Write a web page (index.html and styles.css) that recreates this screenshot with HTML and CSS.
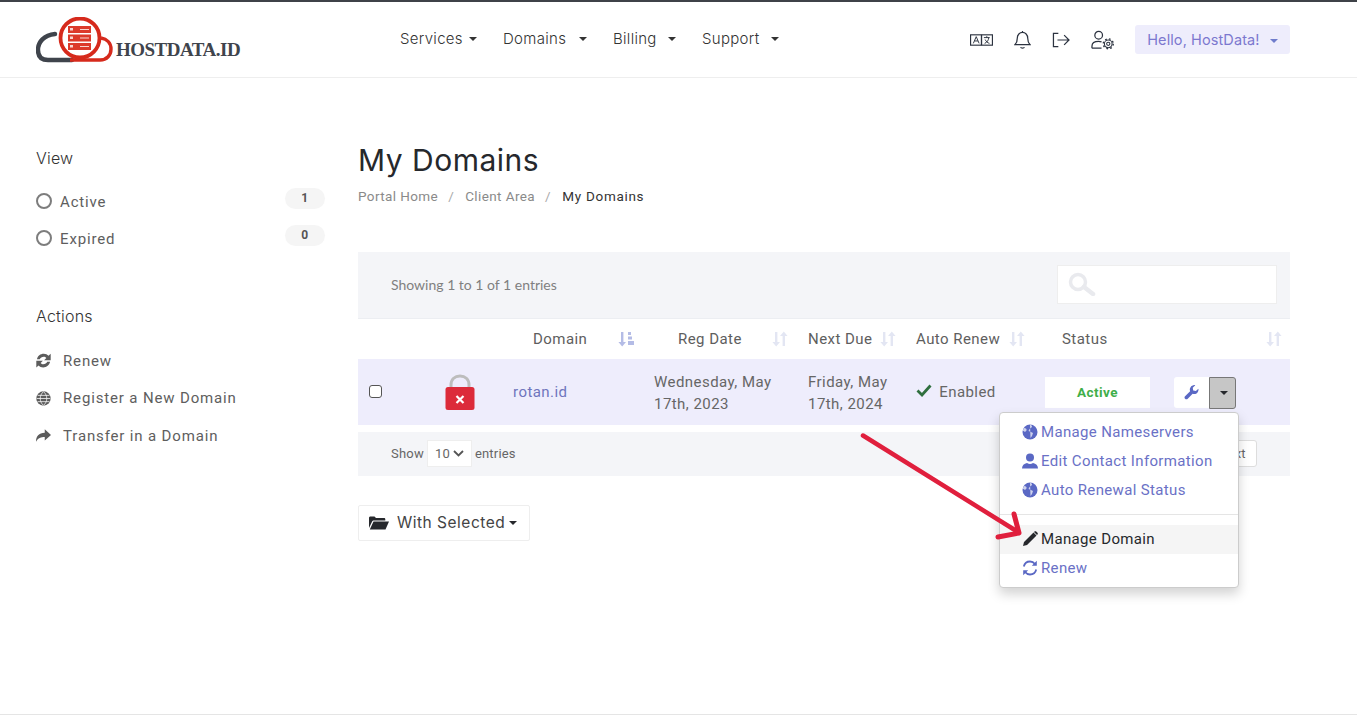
FILE: index.html
```html
<!DOCTYPE html>
<html lang="en">
<head>
    <meta charset="utf-8" />
    <meta name="viewport" content="width=device-width, initial-scale=1.0" />
    <title>My Domains - HostData.id</title>
    <link rel="stylesheet" href="styles.css">
</head>
<body>
    <header class="topbar">
        <a class="logo" href="#">
            <svg class="logo-mark" width="78" height="46" viewBox="0 0 78 46">
                <path d="M19 17C8 18 2 25 2 33c0 7 4 10 10 10h24" fill="none" stroke="#3f444c" stroke-width="4.4" stroke-linecap="round"/>
                <path d="M34 43h30c7 0 11-5 11-11 0-6-4-10-10-11" fill="none" stroke="#d62a1c" stroke-width="3.4"/>
                <circle cx="44" cy="21" r="19.5" fill="#fff" stroke="#d62a1c" stroke-width="3.8"/>
                <g fill="#dc3a2b">
                    <rect x="32" y="9" width="23" height="7"/>
                    <rect x="32" y="17.5" width="23" height="7"/>
                    <rect x="32" y="26" width="23" height="7"/>
                </g>
                <g fill="#f8d5d0">
                    <rect x="34" y="11" width="3" height="2.5"/>
                    <rect x="34" y="19.5" width="3" height="2.5"/>
                    <rect x="34" y="28" width="3" height="2.5"/>
                    <rect x="44" y="12" width="9" height="1"/>
                    <rect x="44" y="20.5" width="9" height="1"/>
                    <rect x="44" y="29" width="9" height="1"/>
                </g>
            </svg>
            <span class="logo-text">HOSTDATA.ID</span>
        </a>
        <nav class="mainnav">
            <a href="#">Services <i class="caret"></i></a>
            <a href="#">Domains <i class="caret"></i></a>
            <a href="#">Billing <i class="caret"></i></a>
            <a href="#">Support <i class="caret"></i></a>
        </nav>
        <div class="tools">
            <svg width="23" height="14" viewBox="0 0 24 14" fill="none" stroke="#2c3340" stroke-width="1.2">
                <rect x="0.6" y="1.6" width="22.8" height="10.8"/>
                <path d="M12 1.5v11" stroke-width="1.4"/>
                <path d="M3.500 10.500l3-7 3 7M4.800 8h3.500M14.500 4.500h6M17.500 3v1.500M15.300 10.500c2.500-1 4-3 4.300-6M15.800 6.500c1 2 2.500 3.500 4.500 4" stroke-width="1"/>
            </svg>
            <svg width="17" height="20" viewBox="0 0 18 20" fill="none" stroke="#2c3340" stroke-width="1.3">
                <path d="M1 15c2-2 2.500-3.500 2.500-7 0-3.500 2.500-6 5.500-6s5.500 2.500 5.500 6c0 3.500.5 5 2.500 7zM9 .5v1.500M7 17.500c.5 1.500 3.500 1.500 4 0"/>
            </svg>
            <svg width="18" height="16" viewBox="0 0 20 18" fill="none" stroke="#2c3340" stroke-width="1.4">
                <path d="M7 1.500H1.500v15H7M6 9h13M13.500 3.500L19 9l-5.500 5.500"/>
            </svg>
            <svg width="23" height="20" viewBox="0 0 24 20" fill="none" stroke="#2c3340" stroke-width="1.3">
                <circle cx="8" cy="5" r="4"/>
                <path d="M1 18.500v-2c0-3 2.500-5 7-5 1.200 0 2.200.1 3 .4M1 18.500h10"/>
                <circle cx="18" cy="14" r="1.700" stroke-width="1.100"/>
                <circle cx="18" cy="14" r="4" stroke-width="1.100"/>
                <circle cx="18" cy="14" r="5.200" stroke-dasharray="1.800 2.300" stroke-width="1.500"/>
            </svg>
            <a class="hello" href="#">Hello, HostData! <i class="caret caret-blue"></i></a>
        </div>
    </header>

    <div class="page">
        <aside class="sidebar">
            <h3 class="side-title">View</h3>
            <ul class="filters">
                <li><span class="radio"></span><span class="filter-name">Active</span><span class="count">1</span></li>
                <li><span class="radio"></span><span class="filter-name">Expired</span><span class="count">0</span></li>
            </ul>
            <h3 class="side-title side-actions">Actions</h3>
            <ul class="actions-list">
                <li>
                    <svg width="15" height="15" viewBox="0 0 24 24" fill="#5c5c5c"><path d="M1.500 10C2.500 4.500 7 1 12.500 1c3 0 5.700 1.200 7.500 3.200L23.500 1v10.500H13l3.500-3.500C15.500 6.700 14 6 12.500 6 9.500 6 7 7.500 6 10zM22.500 14c-1 5.500-5.500 9-11 9-3 0-5.700-1.200-7.500-3.200L.5 23V12.500H11L7.500 16c1 1.300 2.500 2 4 2 3 0 5.500-1.500 6.500-4z"/></svg>
                    Renew
                </li>
                <li>
                    <svg width="15" height="15" viewBox="0 0 24 24" fill="none"><circle cx="12" cy="12" r="11.500" fill="#5c5c5c"/><path d="M1 12h22M2.500 7h19M2.500 17h19M12 1c-7 6-7 16 0 22M12 1c7 6 7 16 0 22" stroke="#fff" stroke-width="1.200"/></svg>
                    Register a New Domain
                </li>
                <li>
                    <svg width="15" height="15" viewBox="0 0 24 24" fill="#5c5c5c"><path d="M14 2l10 9-10 9v-5.500C8 14.500 3.500 16 0 22c0-9 4.500-14.500 14-14.500z"/></svg>
                    Transfer in a Domain
                </li>
            </ul>
        </aside>

        <main class="content">
            <h1 class="title">My Domains</h1>
            <ol class="crumbs">
                <li>Portal Home</li>
                <li>Client Area</li>
                <li class="current">My Domains</li>
            </ol>

            <div class="table-top">
                <span class="info">Showing 1 to 1 of 1 entries</span>
                <div class="search">
                    <svg width="28" height="24" viewBox="0 0 28 24" fill="none" stroke="#e9eaee"><circle cx="10" cy="10" r="7.500" stroke-width="3.500"/><path d="M16 15l9 7" stroke-width="4.500" stroke-linecap="round"/></svg>
                </div>
            </div>

            <table class="domains">
                <colgroup>
                    <col class="c-check"><col class="c-ssl"><col class="c-name"><col class="c-reg"><col class="c-due"><col class="c-auto"><col class="c-status"><col class="c-act">
                </colgroup>
                <thead>
                    <tr>
                        <th></th>
                        <th></th>
                        <th class="th-domain"><div class="th-in">Domain
                            <svg class="sort sort-on" width="16" height="16" viewBox="0 0 16 16"><path d="M3 1h2.400v10H8l-3.800 4.500L.4 11H3z"/><path d="M10 1h3v3h-3zM10 5.500h4v3h-4zM10 10h6v4h-6z"/></svg>
                        </div></th>
                        <th class="th-reg"><div class="th-in">Reg Date
                            <svg class="sort" width="16" height="16" viewBox="0 0 16 16"><path d="M3 1h2.400v10H8l-3.800 4.500L.4 11H3zM10.600 15h2.400V5h2.600L11.800.5 8 5h2.600z"/></svg>
                        </div></th>
                        <th><div class="th-in">Next Due
                            <svg class="sort" width="16" height="16" viewBox="0 0 16 16"><path d="M3 1h2.400v10H8l-3.800 4.500L.4 11H3zM10.600 15h2.400V5h2.600L11.800.5 8 5h2.600z"/></svg>
                        </div></th>
                        <th><div class="th-in">Auto Renew
                            <svg class="sort" width="16" height="16" viewBox="0 0 16 16"><path d="M3 1h2.400v10H8l-3.800 4.500L.4 11H3zM10.600 15h2.400V5h2.600L11.800.5 8 5h2.600z"/></svg>
                        </div></th>
                        <th class="th-status"><div class="th-in">Status</div></th>
                        <th class="th-last"><div class="th-in"><span></span>
                            <svg class="sort" width="16" height="16" viewBox="0 0 16 16"><path d="M3 1h2.400v10H8l-3.800 4.500L.4 11H3zM10.600 15h2.400V5h2.600L11.800.5 8 5h2.600z"/></svg>
                        </div></th>
                    </tr>
                </thead>
                <tbody>
                    <tr>
                        <td class="td-check"><span class="checkbox"></span></td>
                        <td class="td-ssl">
                            <svg width="30" height="36" viewBox="0 0 30 36">
                                <path d="M6 17V11C6 5 10 2 15 2s9 3 9 9v6" fill="none" stroke="#bdbdbd" stroke-width="3"/>
                                <rect x="0.500" y="13" width="29" height="23" rx="2.500" fill="#dc2b3a"/>
                                <path d="M11.500 22l7 7M18.500 22l-7 7" stroke="#fff" stroke-width="2.200"/>
                            </svg>
                        </td>
                        <td class="td-name"><a class="domain-link" href="#">rotan.id</a></td>
                        <td>Wednesday, May 17th, 2023</td>
                        <td>Friday, May 17th, 2024</td>
                        <td class="td-auto">
                            <svg width="16" height="13" viewBox="0 0 16 13" fill="none" stroke="#2f6f3e" stroke-width="2.800"><path d="M1.500 6.500l4.500 4.500L14.500 1.500"/></svg>
                            Enabled
                        </td>
                        <td><span class="badge-active">Active</span></td>
                        <td>
                            <div class="btn-group">
                                <span class="btn-tool">
                                    <svg width="15" height="15" viewBox="0 0 24 24" fill="#5a68c4"><path d="M23 6c.6 3-.5 6-3 7.500-2 1.200-4.300 1.200-6.200.4L6 22c-1.200 1.200-3.200 1.200-4.300 0-1.200-1.200-1.200-3 0-4.200l8.100-7.900C9 8 9 5.700 10.300 3.800 12 1.300 15-.4 18 .3l-4 4 .7 4.300 4.300.8z"/></svg>
                                </span>
                                <span class="btn-toggle"><i class="caret caret-dark"></i></span>
                                <ul class="menu">
                                    <li>
                                        <svg width="16" height="16" viewBox="0 0 16 16"><circle cx="8" cy="8" r="7.500" fill="#5a68c4"/><path d="M8 .5c2 1 2.500 2 1.500 3l-2 1.500-1 2 2.500 1 2 1-1 3-1.500 2zM2 4c2 0 3 1 2.500 2.500L3 8 .8 6.500z" fill="#fff" opacity=".7"/></svg>
                                        Manage Nameservers
                                    </li>
                                    <li>
                                        <svg width="16" height="16" viewBox="0 0 16 16" fill="#5a68c4"><circle cx="8" cy="4.500" r="4"/><path d="M0 15.500c0-3 2-5 5-5.500 2 1.300 4 1.300 6 0 3 .5 5 2.500 5 5.500z"/></svg>
                                        Edit Contact Information
                                    </li>
                                    <li>
                                        <svg width="16" height="16" viewBox="0 0 16 16"><circle cx="8" cy="8" r="7.500" fill="#5a68c4"/><path d="M8 .5c2 1 2.500 2 1.500 3l-2 1.500-1 2 2.500 1 2 1-1 3-1.500 2zM2 4c2 0 3 1 2.500 2.500L3 8 .8 6.500z" fill="#fff" opacity=".7"/></svg>
                                        Auto Renewal Status
                                    </li>
                                    <li class="divider"></li>
                                    <li class="hovered">
                                        <svg width="16" height="16" viewBox="0 0 16 16" fill="#26282c"><path d="M11.500 1.500l3 3L5 14l-4 1 1-4zM12.500.5c.6-.5 1.200-.5 1.700 0l1.300 1.300c.5.5.5 1.100 0 1.700l-.5.500-3-3z"/></svg>
                                        Manage Domain
                                    </li>
                                    <li>
                                        <svg width="16" height="16" viewBox="0 0 16 16" fill="none" stroke="#5a68c4" stroke-width="1.800"><path d="M1.800 6.500C2.500 3.500 5 1.500 8 1.500c2 0 3.800 1 5 2.500M14.200 9.500C13.500 12.500 11 14.500 8 14.500c-2 0-3.800-1-5-2.500"/><path d="M14.800.8v5h-5zM1.200 15.200v-5h5z" fill="#5a68c4" stroke="none"/></svg>
                                        Renew
                                    </li>
                                </ul>
                            </div>
                        </td>
                    </tr>
                </tbody>
            </table>

            <div class="table-foot">
                <div class="length">
                    Show
                    <span class="length-select">10
                        <svg width="11" height="7" viewBox="0 0 11 7" fill="none" stroke="#555" stroke-width="1.800"><path d="M1 1l4.500 4.500L10 1"/></svg>
                    </span>
                    entries
                </div>
                <span class="pager-next">Next</span>
            </div>

            <button class="with-selected">
                <svg width="20" height="15" viewBox="0 0 20 15" fill="#26282c"><path d="M0 3c0-1 .6-1.500 1.500-1.500h4L7 3h8c.8 0 1.300.5 1.300 1.200V5.500H5C4 5.500 3.300 6 3 6.800L0 13zM4.500 6.500H20l-3.500 8H.8z"/></svg>
                With Selected <i class="caret caret-dark"></i>
            </button>
        </main>
    </div>

    <svg class="annotation" width="170" height="115" viewBox="0 0 170 115" fill="none" stroke="#e01f3d" stroke-linecap="round" stroke-linejoin="round">
        <path d="M3 4.500L158 101" stroke-width="4.500"/>
        <path d="M154 83L159 102 138 106" stroke-width="5"/>
    </svg>

    <footer class="foot"></footer>
</body>
</html>
```

FILE: styles.css
```css
* {
    box-sizing: border-box;
}
body {
    margin: 0;
    min-height: 725px;
    font-family: "Roboto", "Open Sans", sans-serif;
    font-size: 15px;
    letter-spacing: 0.45px;
    color: #5e5e5e;
    background-color: #fff;
    overflow: hidden;
    position: relative;
}
a {
    text-decoration: none;
    color: inherit;
}
ul, ol {
    list-style: none;
    margin: 0;
    padding: 0;
}
.caret {
    display: inline-block;
    width: 0;
    height: 0;
    margin-left: 2px;
    vertical-align: middle;
    border-top: 4px solid #333;
    border-left: 4px solid transparent;
    border-right: 4px solid transparent;
}
.caret-blue {
    border-top-color: #6f7ccc;
    margin-left: 6px;
}
.caret-dark {
    border-top-color: #26282c;
}

/* header */
.topbar {
    height: 78px;
    border-top: 2px solid #3f4248;
    border-bottom: 1px solid #eee;
    padding: 0 67px 0 36px;
    display: flex;
    align-items: center;
}
.logo {
    display: flex;
    align-items: flex-end;
    width: 364px;
    height: 46px;
}
.logo-mark {
    flex: none;
}
.logo-text {
    font-family: "Liberation Serif", serif;
    font-weight: bold;
    font-size: 19px;
    letter-spacing: -0.5px;
    color: #3f444c;
    margin-left: 2px;
    margin-bottom: 2px;
}
.mainnav {
    display: grid;
    grid-template-columns: 77px 84px 63px 77px;
    gap: 26px;
    margin-top: -2px;
    font-family: "Inter", sans-serif;
    font-weight: 300;
    font-size: 15px;
    letter-spacing: 0.3px;
    color: #333;
}
.mainnav a {
    display: flex;
    align-items: center;
    justify-content: space-between;
}
.tools {
    margin-left: auto;
    display: flex;
    align-items: center;
    gap: 21px;
}
.hello {
    width: 155px;
    height: 29px;
    line-height: 29px;
    text-align: center;
    background-color: #eeedfc;
    border-radius: 3px;
    color: #7c78cf;
    font-family: "Inter", sans-serif;
    font-size: 14.500px;
    letter-spacing: 0.1px;
}

/* page */
.page {
    display: flex;
    padding: 0 67px 0 36px;
}
.sidebar {
    width: 289px;
    flex: none;
    padding-top: 70px;
    letter-spacing: 0.85px;
}
.side-title {
    margin: 0;
    font-family: "Inter", sans-serif;
    font-weight: 300;
    font-size: 16px;
    letter-spacing: 0.2px;
    line-height: 20px;
    color: #333;
}
.filters {
    margin-top: 14px;
}
.filters li {
    display: flex;
    align-items: center;
    height: 37px;
}
.radio {
    width: 16px;
    height: 16px;
    border: 2px solid #7d7d7d;
    border-radius: 50%;
    margin-right: 8px;
}
.filter-name {
    flex: 1;
    padding-top: 2px;
}
.count {
    width: 40px;
    height: 21px;
    line-height: 21px;
    margin-top: -5px;
    border-radius: 11px;
    background-color: #f5f5f5;
    text-align: center;
    font-size: 12px;
    font-weight: bold;
    color: #555;
}
.side-actions {
    margin-top: 50px;
}
.actions-list {
    margin-top: 16px;
}
.actions-list li {
    display: flex;
    align-items: center;
    gap: 12px;
    height: 37.500px;
}
.content {
    flex: 1;
    padding-left: 33px;
    position: relative;
}
.title {
    margin: 64px 0 0;
    font-family: "Inter", sans-serif;
    font-weight: 400;
    font-size: 30px;
    letter-spacing: 0.5px;
    line-height: 36px;
    color: #26282c;
}
.crumbs {
    display: flex;
    margin-top: 8px;
    font-size: 13.500px;
    line-height: 20px;
    letter-spacing: 0.4px;
    color: #8a8a8a;
}
.crumbs li + li::before {
    content: "/";
    margin: 0 11px 0 10px;
    color: #aaa;
}
.crumbs .current {
    color: #333;
    letter-spacing: 0.7px;
}

/* table */
.table-top {
    margin-top: 46px;
    height: 66px;
    padding: 0 13px 2px 33px;
    background-color: #f4f5f8;
    display: flex;
    align-items: center;
    justify-content: space-between;
}
.info {
    font-family: "Lato", sans-serif;
    font-size: 14px;
    letter-spacing: 0;
    color: #808080;
}
.search {
    width: 220px;
    height: 39px;
    background-color: #fff;
    border: 1px solid #eee;
    padding: 6px 10px;
}
.domains {
    width: 932px;
    table-layout: fixed;
    border-collapse: collapse;
}
.c-check { width: 62px; }
.c-ssl { width: 80px; }
.c-name { width: 142px; }
.c-reg { width: 154px; }
.c-due { width: 108px; }
.c-auto { width: 129px; }
.c-status { width: 129px; }
.c-act { width: 128px; }
.domains th {
    height: 40px;
    padding: 0 8px 0 12px;
    font-weight: normal;
    text-align: left;
    border-top: 1px solid #eceef2;
    color: #5e5e5e;
}
.th-in {
    display: flex;
    align-items: center;
    justify-content: space-between;
}
.domains .th-domain {
    padding-left: 33px;
}
.domains .th-reg {
    padding-left: 36px;
}
.domains .th-status {
    padding-left: 29px;
}
.sort {
    flex: none;
    fill: #e3e6f3;
}
.sort-on {
    fill: #b4bce6;
}
.domains td {
    height: 66px;
    padding: 2px 12px 0;
    background-color: #eeedfc;
    line-height: 22px;
    color: #666;
}
.domains .td-check {
    padding: 0 11px;
}
.domains .td-name {
    padding: 0 13px;
}
.domains .td-auto {
    padding: 0 12px;
}
.checkbox {
    display: block;
    width: 13px;
    height: 13px;
    border: 1px solid #555;
    border-radius: 3px;
    background-color: #fff;
}
.domains .td-ssl {
    padding: 6px 0 0;
    text-align: center;
}
.domain-link {
    color: #6f75bd;
}
.td-auto svg {
    margin-right: 3px;
}
.badge-active {
    display: block;
    width: 105px;
    height: 31px;
    line-height: 31px;
    background-color: #fff;
    text-align: center;
    font-size: 13.500px;
    font-weight: bold;
    color: #3fae49;
}
.btn-group {
    display: flex;
    position: relative;
    width: 62px;
    height: 32px;
}
.btn-tool {
    width: 35px;
    height: 31px;
    background-color: #fff;
    border-radius: 3px 0 0 3px;
    display: flex;
    align-items: center;
    justify-content: center;
}
.btn-toggle {
    width: 27px;
    height: 32px;
    background-color: #c6c6c6;
    border: 1px solid #777;
    border-radius: 0 3px 3px 0;
    display: flex;
    align-items: center;
    justify-content: center;
}
.menu {
    position: absolute;
    top: 35px;
    right: -3px;
    width: 240px;
    height: 176px;
    padding-top: 5px;
    background-color: #fff;
    border: 1px solid #ccc;
    border-radius: 4px;
    box-shadow: 0 6px 12px rgba(0, 0, 0, 0.175);
    letter-spacing: 0.35px;
    z-index: 5;
}
.menu li {
    display: flex;
    align-items: center;
    gap: 3px;
    height: 29px;
    padding-left: 22px;
    color: #6a71c6;
}
.menu .divider {
    height: 1px;
    padding: 0;
    margin: 9px 0 10px;
    background-color: #e5e5e5;
}
.menu .hovered {
    background-color: #f5f5f5;
    color: #26282c;
}
.table-foot {
    margin-top: 7px;
    height: 44px;
    padding: 0 33px;
    background-color: #f4f5f8;
    display: flex;
    align-items: center;
    justify-content: space-between;
    font-size: 13px;
    letter-spacing: 0.2px;
    color: #666;
}
.length {
    display: flex;
    align-items: center;
    gap: 3px;
}
.length-select {
    width: 45px;
    height: 27px;
    padding: 0 7px;
    background-color: #fff;
    border: 1px solid #eee;
    display: flex;
    align-items: center;
    justify-content: space-between;
}
.pager-next {
    width: 50px;
    height: 27px;
    line-height: 25px;
    text-align: center;
    background-color: #fff;
    border: 1px solid #ddd;
    border-radius: 3px;
}
.with-selected {
    display: flex;
    align-items: center;
    gap: 8px;
    margin-top: 29px;
    width: 172px;
    height: 36px;
    padding: 0 10px;
    background-color: #fff;
    border: 1px solid #eee;
    border-radius: 2px;
    font-family: "Inter", sans-serif;
    font-size: 15.500px;
    letter-spacing: 0.5px;
    color: #444;
}
.with-selected .caret {
    margin-left: -4px;
}
.annotation {
    position: absolute;
    left: 860px;
    top: 431px;
    z-index: 6;
}
.foot {
    position: absolute;
    left: 0;
    right: 0;
    top: 714px;
    border-top: 1px solid #e5e5e5;
}
```
